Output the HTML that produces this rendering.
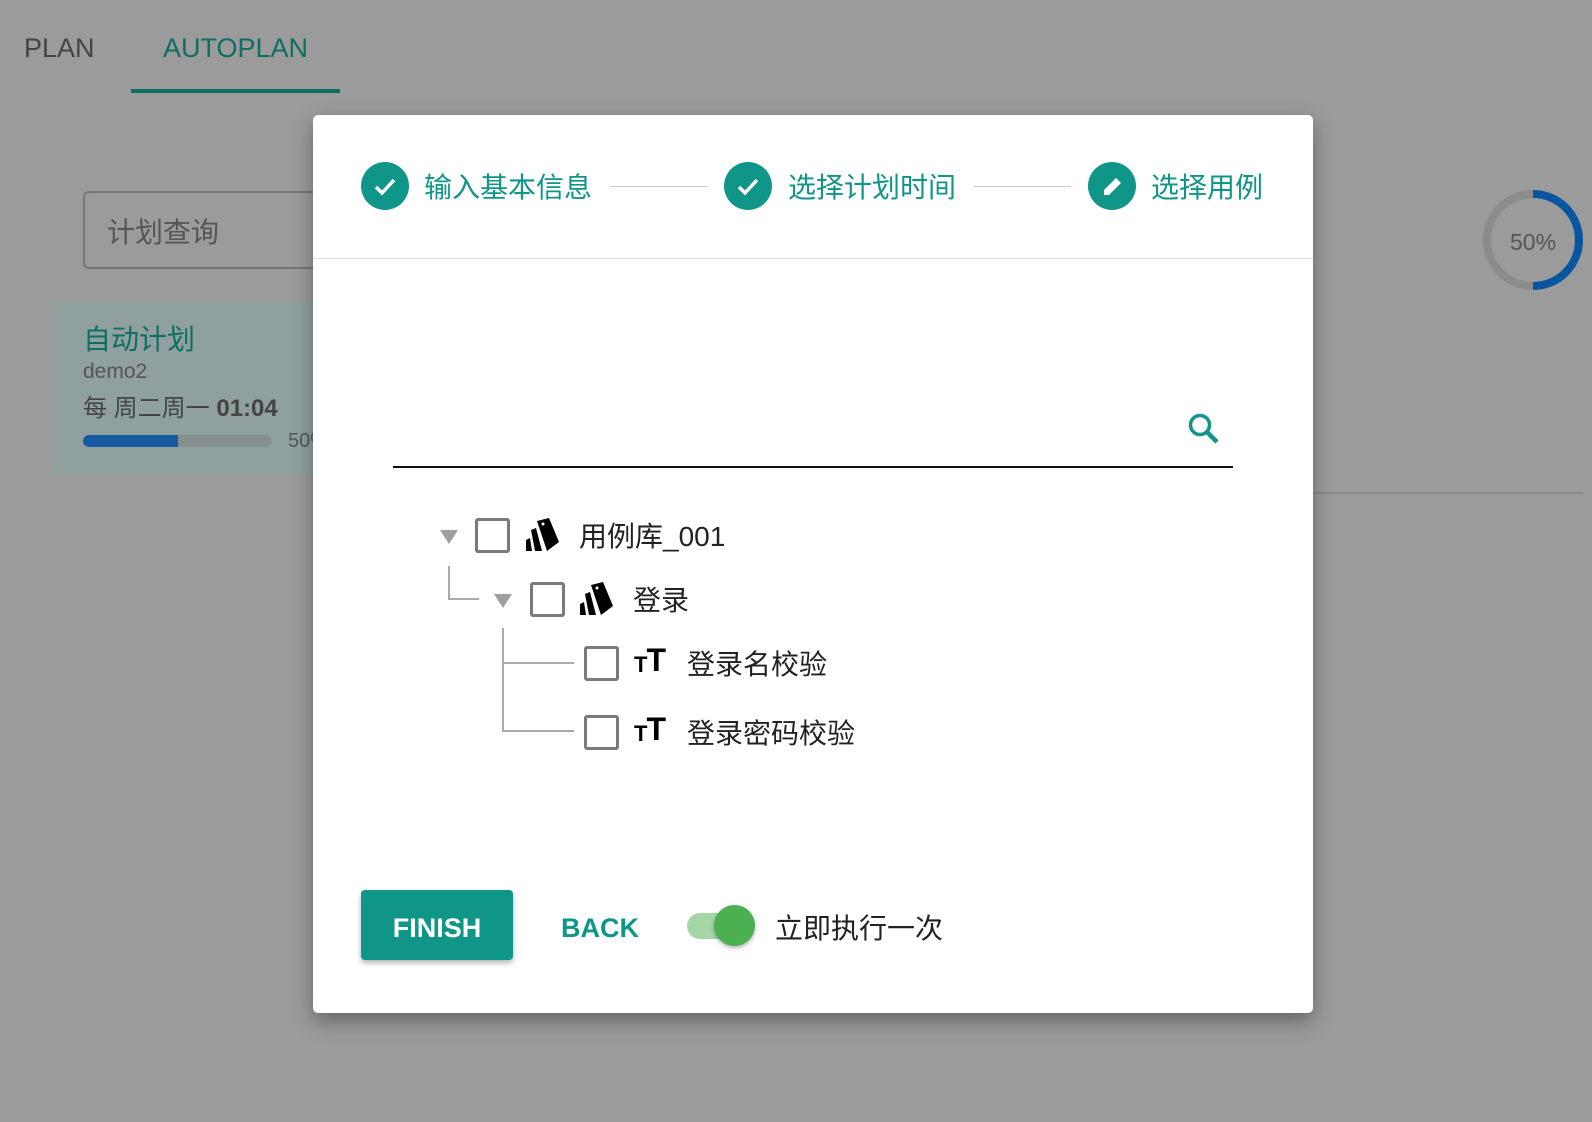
<!DOCTYPE html>
<html><head><meta charset="utf-8"><style>
*{margin:0;padding:0;box-sizing:border-box}
body{width:1592px;height:1122px;background:#9b9b9b;position:relative;overflow:hidden;font-family:"Liberation Sans","Noto Sans CJK SC",sans-serif}
.a{position:absolute;white-space:nowrap}
.cb{position:absolute;width:35px;height:35px;border:3px solid #7a7a7a;border-radius:3px;background:#fff}
.tri{position:absolute;width:0;height:0;border-left:9px solid transparent;border-right:9px solid transparent;border-top:14px solid #9e9e9e}
.tx{font-size:28px;color:#222}
.st{font-size:28px;color:#0f9688}
.circ{position:absolute;width:48px;height:48px;border-radius:50%;background:#0f9688}
.tt{position:absolute;display:flex;align-items:flex-end;font-weight:bold;color:#000;line-height:1;height:28px}
</style></head><body>
<div class="a" style="left:24px;top:33px;font-size:27px;color:#444">PLAN</div>
<div class="a" style="left:163px;top:33px;font-size:27px;color:#0d6e62">AUTOPLAN</div>
<div class="a" style="left:131px;top:89px;width:209px;height:4px;background:#0d6e62"></div>
<div class="a" style="left:83px;top:191px;width:260px;height:78px;border:2px solid #777;border-radius:6px"></div>
<div class="a" style="left:107px;top:211px;font-size:28px;color:#555">计划查询</div>
<div class="a" style="left:51px;top:302px;width:270px;height:172px;background:#8fa09f"></div>
<div class="a" style="left:83px;top:318px;font-size:28px;color:#0d6e62">自动计划</div>
<div class="a" style="left:83px;top:360px;font-size:21px;color:#555">demo2</div>
<div class="a" style="left:83px;top:388px;font-size:24px;color:#444">每 周二周一 <b>01:04</b></div>
<div class="a" style="left:83px;top:435px;width:189px;height:12px;border-radius:6px;background:#868f8f;overflow:hidden"><div style="width:95px;height:12px;background:#175aa0"></div></div>
<div class="a" style="left:288px;top:430px;font-size:20px;color:#555">50%</div>
<div class="a" style="left:1313px;top:492px;width:270px;height:2px;background:#8a8a8a"></div>
<svg class="a" style="left:1478px;top:185px" width="110" height="110"><circle cx="55" cy="55" r="46" fill="none" stroke="#8c8c8c" stroke-width="8"/><path d="M55 9 A46 46 0 0 1 55 101" fill="none" stroke="#0a55a0" stroke-width="8"/></svg>
<div class="a" style="left:1510px;top:229px;font-size:23px;color:#555">50%</div>

<div class="a" style="left:313px;top:115px;width:1000px;height:898px;background:#fff;border-radius:5px;box-shadow:0 8px 20px rgba(0,0,0,.35)"></div>
<div class="a" style="left:313px;top:258px;width:1000px;height:1px;background:#ddd"></div>
<div class="circ" style="left:361px;top:162px"></div>
<svg class="a" style="left:361px;top:162px" width="48" height="48"><path d="M15 25 L21 31 L33 18" fill="none" stroke="#fff" stroke-width="3.5"/></svg>
<div class="a st" style="left:424px;top:166px">输入基本信息</div>
<div class="a" style="left:610px;top:186px;width:98px;height:1px;background:#ccc"></div>
<div class="circ" style="left:724px;top:162px"></div>
<svg class="a" style="left:724px;top:162px" width="48" height="48"><path d="M15 25 L21 31 L33 18" fill="none" stroke="#fff" stroke-width="3.5"/></svg>
<div class="a st" style="left:788px;top:166px">选择计划时间</div>
<div class="a" style="left:974px;top:186px;width:97px;height:1px;background:#ccc"></div>
<div class="circ" style="left:1088px;top:162px"></div>
<svg class="a" style="left:1088px;top:162px" width="48" height="48"><path d="M16 33 L16 28 L28 16 L33 21 L21 33 Z" fill="#fff"/></svg>
<div class="a st" style="left:1151px;top:166px">选择用例</div>

<div class="a" style="left:393px;top:466px;width:840px;height:2px;background:#111"></div>
<svg class="a" style="left:1185px;top:410px" width="45" height="40"><circle cx="15" cy="15" r="9.5" fill="none" stroke="#0f9688" stroke-width="3.5"/><path d="M22 22 L32 32" stroke="#0f9688" stroke-width="4.5"/></svg>

<div class="tri" style="left:440px;top:530px"></div>
<div class="cb" style="left:475px;top:518px"></div>
<svg class="a" style="left:523px;top:518px" width="38" height="36"><path d="M14 3 L26 0 L36 24 L24 33 Z" fill="#000"/><circle cx="20" cy="6" r="1.5" fill="#fff"/><path d="M8 12 L13 10 L19 33 L12 33 Z" fill="#000"/><path d="M3 22 L7 20 L9 33 L3 33 Z" fill="#000"/></svg>
<div class="a tx" style="left:579px;top:515px">用例库_001</div>
<div class="a" style="left:448px;top:566px;width:2px;height:33px;background:#aaa"></div>
<div class="a" style="left:448px;top:598px;width:31px;height:2px;background:#aaa"></div>
<div class="tri" style="left:494px;top:594px"></div>
<div class="cb" style="left:530px;top:582px"></div>
<svg class="a" style="left:577px;top:582px" width="38" height="36"><path d="M14 3 L26 0 L36 24 L24 33 Z" fill="#000"/><circle cx="20" cy="6" r="1.5" fill="#fff"/><path d="M8 12 L13 10 L19 33 L12 33 Z" fill="#000"/><path d="M3 22 L7 20 L9 33 L3 33 Z" fill="#000"/></svg>
<div class="a tx" style="left:633px;top:579px">登录</div>
<div class="a" style="left:502px;top:628px;width:2px;height:104px;background:#aaa"></div>
<div class="a" style="left:502px;top:662px;width:72px;height:2px;background:#aaa"></div>
<div class="a" style="left:502px;top:730px;width:72px;height:2px;background:#aaa"></div>
<div class="cb" style="left:584px;top:646px"></div>
<div class="tt" style="left:634px;top:648px"><span style="font-size:22px">T</span><span style="font-size:32px;margin-left:-1px">T</span></div>
<div class="a tx" style="left:687px;top:643px">登录名校验</div>
<div class="cb" style="left:584px;top:715px"></div>
<div class="tt" style="left:634px;top:717px"><span style="font-size:22px">T</span><span style="font-size:32px;margin-left:-1px">T</span></div>
<div class="a tx" style="left:687px;top:712px">登录密码校验</div>

<div class="a" style="left:361px;top:890px;width:152px;height:70px;background:#0f9688;border-radius:4px;box-shadow:0 3px 6px rgba(0,0,0,.3);color:#fff;font-size:27px;line-height:76px;text-align:center;font-weight:bold">FINISH</div>
<div class="a" style="left:561px;top:913px;font-size:27px;color:#0f9688;font-weight:bold">BACK</div>
<div class="a" style="left:687px;top:913px;width:60px;height:26px;border-radius:13px;background:#a4d6a6"></div>
<div class="a" style="left:714px;top:905px;width:41px;height:41px;border-radius:50%;background:#4caf50;box-shadow:0 2px 4px rgba(0,0,0,.3)"></div>
<div class="a tx" style="left:775px;top:907px">立即执行一次</div>
</body></html>
